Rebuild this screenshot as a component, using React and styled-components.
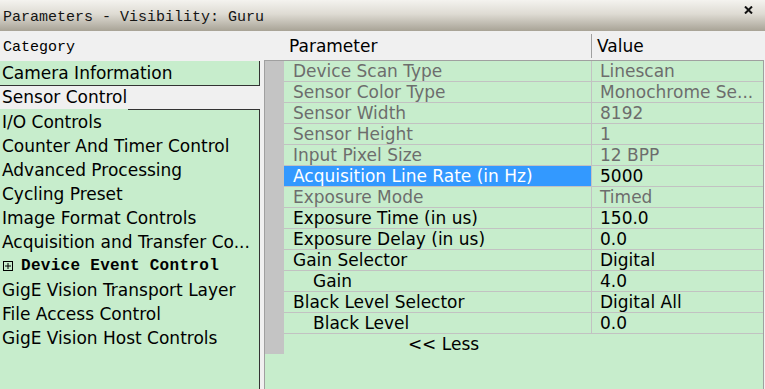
import React from 'react'
import styled, { createGlobalStyle, css } from 'styled-components'

const GlobalStyle = createGlobalStyle`
  html, body {
    margin: 0;
    padding: 0;
    background: #f0f0f0;
  }
  body {
    font-family: "DejaVu Sans", sans-serif;
  }
`

const GREEN = '#C7EDCC'
const DARK_LINE = '#333333'
const GRID_LINE = '#c2c2c2'

const Window = styled.div`
  width: 765px;
  height: 389px;
  display: flex;
  flex-direction: column;
  background: #f0f0f0;
  overflow: hidden;
`

const TitleBar = styled.div`
  height: 31px;
  flex: none;
  box-sizing: border-box;
  display: flex;
  align-items: center;
  justify-content: space-between;
  padding: 4px 12px 0 3px;
  background: linear-gradient(#f4f3ef, #dedbd3 45%, #a8a396);
  font-family: "Liberation Mono", monospace;
  font-size: 15px;
  color: #141414;
`

const CloseIcon = styled.svg`
  width: 9px;
  height: 8px;
  align-self: flex-start;
  margin-top: 2px;
`

const Header = styled.div`
  height: 29px;
  flex: none;
  display: grid;
  grid-template-columns: 284px 307px 1fr;
  align-items: center;
`

const CategoryTitle = styled.div`
  font-family: "Liberation Mono", monospace;
  font-size: 15px;
  padding: 3px 0 0 3px;
  color: #000;
`

const ColumnTitle = styled.div`
  font-size: 17px;
  color: #000;
  padding-left: 5px;
  height: 24px;
  line-height: 25px;
  ${props => props.$divider && css`
    border-left: 1px solid #a0a0a0;
  `}
`

const Body = styled.div`
  flex: 1;
  min-height: 0;
  display: flex;
`

const CategoryPane = styled.div`
  width: 260px;
  flex: none;
  display: flex;
  flex-direction: column;
  padding-top: 1px;
`

const CategoryGroup = styled.div`
  box-sizing: border-box;
  border-right: 1px solid ${DARK_LINE};
  ${props => props.$first ? css`
    background: ${GREEN};
    border-bottom: 1px solid ${DARK_LINE};
  ` : css`
    flex: 1;
    padding-top: 1px;
    background: linear-gradient(to right, transparent 128px, ${DARK_LINE} 128px) top / 100% 1px no-repeat, ${GREEN};
  `}
`

const CategoryItem = styled.div`
  height: 24px;
  line-height: 24px;
  padding-left: 2px;
  font-size: 17px;
  color: #000;
  white-space: nowrap;
  display: flex;
  align-items: center;
`

const SelectedTab = styled(CategoryItem)`
  height: 23px;
  line-height: 23px;
`

const PlusBox = styled.svg`
  width: 10px;
  height: 10px;
  margin: 0 8px 0 1px;
  flex: none;
`

const MonoBold = styled.span`
  font-family: "Liberation Mono", monospace;
  font-weight: bold;
  font-size: 16px;
  letter-spacing: 0.3px;
`

const TablePane = styled.div`
  flex: 1;
  margin-left: 4px;
  margin-right: 1px;
  border: 1px solid #a0a0a0;
  border-bottom: none;
  background: ${GREEN};
`

const Table = styled.div`
  display: grid;
  grid-template-columns: 19px 307px 1fr;
  grid-template-rows: repeat(13, 21px) 20px;
`

const RowHead = styled.div`
  background: #c4c4c4;
`

const Cell = styled.div`
  box-sizing: border-box;
  border-bottom: 1px solid ${GRID_LINE};
  font-size: 17px;
  line-height: 20px;
  white-space: nowrap;
  overflow: hidden;
  color: ${props => props.$disabled ? '#6d6d6d' : '#000'};
`

const ParamCell = styled(Cell)`
  padding-left: ${props => props.$indent ? 29 : 9}px;
  ${props => props.$selected && css`
    background: #3399ff;
    color: #fff;
  `}
`

const ValueCell = styled(Cell)`
  border-left: 1px solid ${GRID_LINE};
  padding-left: 8px;
`

const LessButton = styled.div`
  grid-column: 2 / span 2;
  width: 307px;
  box-sizing: border-box;
  padding-left: 12px;
  text-align: center;
  font-size: 17px;
  line-height: 20px;
  color: #000;
`

const categories = [
  'I/O Controls',
  'Counter And Timer Control',
  'Advanced Processing',
  'Cycling Preset',
  'Image Format Controls',
  'Acquisition and Transfer Co...',
  null,
  'GigE Vision Transport Layer',
  'File Access Control',
  'GigE Vision Host Controls',
]

const params = [
  { name: 'Device Scan Type', value: 'Linescan', disabled: true },
  { name: 'Sensor Color Type', value: 'Monochrome Se...', disabled: true },
  { name: 'Sensor Width', value: '8192', disabled: true },
  { name: 'Sensor Height', value: '1', disabled: true },
  { name: 'Input Pixel Size', value: '12 BPP', disabled: true },
  { name: 'Acquisition Line Rate (in Hz)', value: '5000', selected: true },
  { name: 'Exposure Mode', value: 'Timed', disabled: true },
  { name: 'Exposure Time (in us)', value: '150.0' },
  { name: 'Exposure Delay (in us)', value: '0.0' },
  { name: 'Gain Selector', value: 'Digital' },
  { name: 'Gain', value: '4.0', indent: true },
  { name: 'Black Level Selector', value: 'Digital All' },
  { name: 'Black Level', value: '0.0', indent: true },
]

function App() {
  return (
    <>
      <GlobalStyle />
      <Window>
        <TitleBar>
          <span>Parameters - Visibility: Guru</span>
          <CloseIcon viewBox="0 0 9 8">
            <path d="M1 0.5 L8 7.5 M8 0.5 L1 7.5" stroke="#111" strokeWidth="2" />
          </CloseIcon>
        </TitleBar>

        <Header>
          <CategoryTitle>Category</CategoryTitle>
          <ColumnTitle>Parameter</ColumnTitle>
          <ColumnTitle $divider>Value</ColumnTitle>
        </Header>

        <Body>
          <CategoryPane>
            <CategoryGroup $first>
              <CategoryItem>Camera Information</CategoryItem>
            </CategoryGroup>
            <SelectedTab>Sensor Control</SelectedTab>
            <CategoryGroup>
              {categories.map((c, i) => c ? (
                <CategoryItem key={i}>{c}</CategoryItem>
              ) : (
                <CategoryItem key={i}>
                  <PlusBox viewBox="0 0 10 10">
                    <rect x="0.5" y="0.5" width="9" height="9" fill="none" stroke="#000" />
                    <path d="M2 5 H8 M5 2 V8" stroke="#000" />
                  </PlusBox>
                  <MonoBold>Device Event Control</MonoBold>
                </CategoryItem>
              ))}
            </CategoryGroup>
          </CategoryPane>

          <TablePane>
            <Table>
              {params.map(p => (
                <React.Fragment key={p.name}>
                  <RowHead />
                  <ParamCell $disabled={p.disabled} $selected={p.selected} $indent={p.indent}>
                    {p.name}
                  </ParamCell>
                  <ValueCell $disabled={p.disabled}>{p.value}</ValueCell>
                </React.Fragment>
              ))}
              <RowHead />
              <LessButton>&lt;&lt; Less</LessButton>
            </Table>
          </TablePane>
        </Body>
      </Window>
    </>
  )
}

export default App
